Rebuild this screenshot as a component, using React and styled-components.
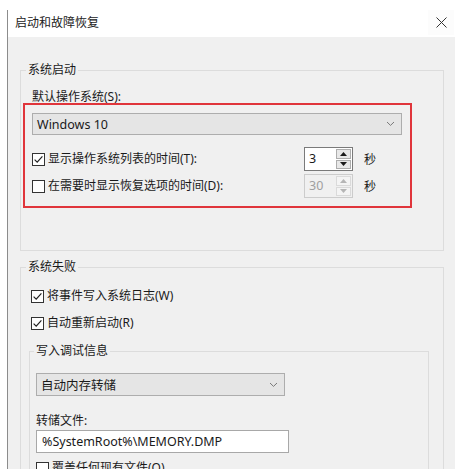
import React from 'react';
import styled, { createGlobalStyle } from 'styled-components';

const GlobalStyle = createGlobalStyle`
  html, body {
    margin: 0;
    padding: 0;
    background: #ffffff;
  }
  body {
    font-family: "Noto Sans", "Noto Sans CJK SC", sans-serif;
    font-size: 12px;
    color: #1a1a1a;
    overflow: hidden;
  }
`;

const Page = styled.div`
  width: 470px;
  height: 469px;
  overflow: hidden;
  padding: 10px 0 0 7px;
  box-sizing: border-box;
  background: #ffffff;
`;

const Window = styled.div`
  width: 448px;
  height: 459px;
  border-left: 1px solid #8c8c8c;
  box-sizing: border-box;
  display: flex;
  flex-direction: column;
`;

const TitleBar = styled.div`
  height: 27px;
  flex-shrink: 0;
  display: flex;
  align-items: center;
  justify-content: space-between;
  padding: 0 0 2px 7px;
  box-sizing: border-box;
  background: #ffffff;
`;

const Title = styled.span`
  font-size: 12px;
  line-height: 16px;
  color: #222222;
`;

const CloseButton = styled.button`
  width: 26px;
  height: 25px;
  margin-right: 1px;
  border: none;
  background: #fcfcfc;
  display: flex;
  align-items: center;
  justify-content: center;
  padding: 0;
`;

const Body = styled.div`
  flex: 1;
  background: #f0f0f0;
  padding: 25px 11px 0 12px;
  overflow: hidden;
`;

const Group = styled.fieldset`
  margin: ${(p) => p.$top || 0}px 0 0 0;
  padding: ${(p) => p.$pad};
  border: 1px solid #dcdcdc;
  min-width: 0;
  width: ${(p) => p.$width || 'auto'};
  box-sizing: border-box;
`;

const Legend = styled.legend`
  padding: 0 2px;
  margin-left: ${(p) => p.$shift}px;
  font-size: 12px;
  line-height: 16px;
`;

const Label = styled.div`
  font-size: 12px;
  line-height: ${(p) => p.$lh || 14}px;
  margin-top: ${(p) => p.$top || 0}px;
`;

const Highlight = styled.div`
  margin: -1px 0 0 -9px;
  width: 389px;
  box-sizing: border-box;
  border: 2px solid #e0353b;
  padding: 8px 8px 8px 7px;
`;

const Select = styled.div`
  width: ${(p) => p.$width}px;
  height: ${(p) => p.$height || 23}px;
  box-sizing: border-box;
  background: #e5e5e5;
  border: 1px solid #adadad;
  display: flex;
  align-items: center;
  justify-content: space-between;
  padding: 0 6px 0 4px;
  font-size: 12.5px;
`;

const SpinRow = styled.div`
  display: grid;
  grid-template-columns: 261px 49px auto;
  column-gap: 11px;
  align-items: center;
  height: 24px;
  margin-top: ${(p) => p.$top}px;
`;

const CheckLine = styled.label`
  display: flex;
  align-items: center;
  gap: 3px;
  font-size: 12px;
  line-height: 20px;
  height: 20px;
  padding-left: ${(p) => p.$indent || 0}px;
  margin-top: ${(p) => p.$top || 0}px;
`;

const Box = styled.span`
  width: 13px;
  height: 13px;
  box-sizing: border-box;
  border: 1px solid #333333;
  background: #ffffff;
  display: flex;
  align-items: center;
  justify-content: center;
  flex-shrink: 0;
`;

const Spinner = styled.div`
  display: flex;
  height: 24px;
  box-sizing: border-box;
  border: 1px solid ${(p) => (p.$disabled ? '#cccccc' : '#7a7a7a')};
  background: ${(p) => (p.$disabled ? '#f0f0f0' : '#ffffff')};
`;

const SpinValue = styled.div`
  flex: 1;
  padding-left: 4px;
  font-size: 12.5px;
  line-height: 22px;
  color: ${(p) => (p.$disabled ? '#a0a0a0' : '#1a1a1a')};
`;

const SpinButtons = styled.div`
  width: 16px;
  display: flex;
  flex-direction: column;
  gap: 1px;
  padding: 1px 1px 1px 0;
  box-sizing: border-box;
`;

const SpinButton = styled.div`
  flex: 1;
  box-sizing: border-box;
  border: 1px solid ${(p) => (p.$disabled ? '#dadada' : '#adadad')};
  background: ${(p) => (p.$disabled ? '#f4f4f4' : '#e8e8e8')};
  display: flex;
  align-items: center;
  justify-content: center;
`;

const Unit = styled.span`
  font-size: 12px;
`;

const TextField = styled.div`
  width: 253px;
  height: 23px;
  box-sizing: border-box;
  margin-top: 1px;
  background: #ffffff;
  border: 1px solid #a8a8a8;
  padding-left: 5px;
  font-size: 12.5px;
  line-height: 21px;
`;

const Chevron = () => (
  <svg width="9" height="6" viewBox="0 0 9 6">
    <path d="M1 1 L4.5 4.4 L8 1" fill="none" stroke="#7a7a7a" strokeWidth="1" />
  </svg>
);

const Tick = () => (
  <svg width="11" height="11" viewBox="0 0 11 11">
    <path d="M1.6 5.6 L4.2 8.2 L9.4 2.4" fill="none" stroke="#222" strokeWidth="1.2" />
  </svg>
);

const Arrow = ({ up, color }) => (
  <svg width="7" height="4" viewBox="0 0 7 4">
    <path d={up ? 'M0 4 L3.5 0 L7 4 Z' : 'M0 0 L3.5 4 L7 0 Z'} fill={color} />
  </svg>
);

const Check = ({ checked }) => <Box>{checked && <Tick />}</Box>;

const Spin = ({ value, disabled }) => {
  const color = disabled ? '#b5b5b5' : '#1a1a1a';
  return (
    <Spinner $disabled={disabled}>
      <SpinValue $disabled={disabled}>{value}</SpinValue>
      <SpinButtons>
        <SpinButton $disabled={disabled}>
          <Arrow up color={color} />
        </SpinButton>
        <SpinButton $disabled={disabled}>
          <Arrow color={color} />
        </SpinButton>
      </SpinButtons>
    </Spinner>
  );
};

const App = () => (
  <Page>
    <GlobalStyle />
    <Window>
      <TitleBar>
        <Title>启动和故障恢复</Title>
        <CloseButton aria-label="关闭">
          <svg width="11" height="11" viewBox="0 0 11 11">
            <path d="M0.5 0.5 L10.5 10.5 M10.5 0.5 L0.5 10.5" stroke="#333" strokeWidth="1" />
          </svg>
        </CloseButton>
      </TitleBar>
      <Body>
        <Group $pad="12px 11px 42px 11px">
          <Legend $shift={-6}>系统启动</Legend>
          <Label>默认操作系统(S):</Label>
          <Highlight>
            <Select $width={370} $height={22}>
              <span>Windows 10</span>
              <Chevron />
            </Select>
            <SpinRow $top={12}>
              <CheckLine>
                <Check checked />
                显示操作系统列表的时间(T):
              </CheckLine>
              <Spin value="3" />
              <Unit>秒</Unit>
            </SpinRow>
            <SpinRow $top={3}>
              <CheckLine>
                <Check />
                在需要时显示恢复选项的时间(D):
              </CheckLine>
              <Spin value="30" disabled />
              <Unit>秒</Unit>
            </SpinRow>
          </Highlight>
        </Group>

        <Group $top={8} $pad="11px 15px 20px 8px">
          <Legend $shift={-3}>系统失败</Legend>
          <CheckLine $indent={2}>
            <Check checked />
            将事件写入系统日志(W)
          </CheckLine>
          <CheckLine $indent={2} $top={7}>
            <Check checked />
            自动重新启动(R)
          </CheckLine>
          <Group $top={10} $width="400px" $pad="14px 6px 20px 6px">
            <Legend $shift={-2}>写入调试信息</Legend>
            <Select $width={249}>
              <span>自动内存转储</span>
              <Chevron />
            </Select>
            <Label $lh={16} $top={17}>
              转储文件:
            </Label>
            <TextField>%SystemRoot%\MEMORY.DMP</TextField>
            <CheckLine $top={5}>
              <Check />
              覆盖任何现有文件(O)
            </CheckLine>
          </Group>
        </Group>
      </Body>
    </Window>
  </Page>
);

export default App;
